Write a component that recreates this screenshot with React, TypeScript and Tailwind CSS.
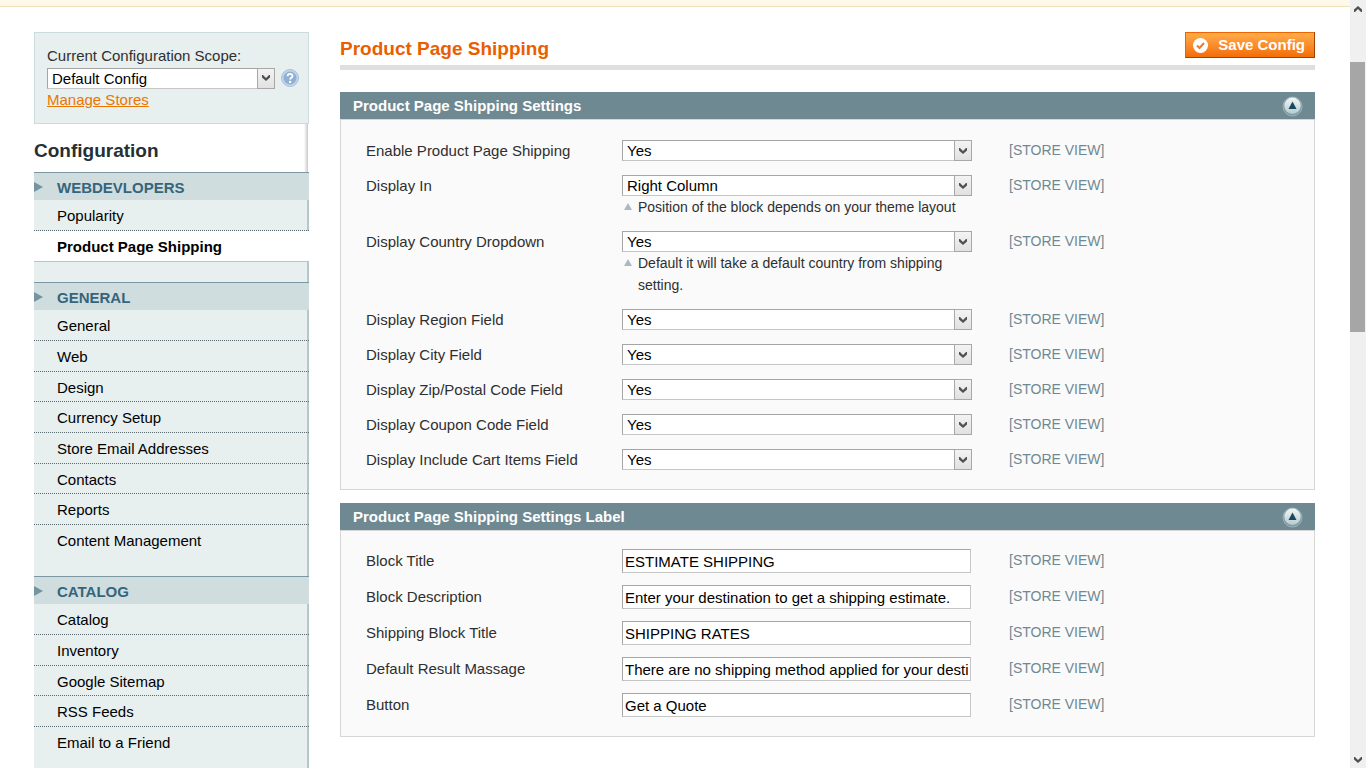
import React from "react";

const storeNav = [
  { title: "WEBDEVLOPERS", items: ["Popularity", "Product Page Shipping"] },
  {
    title: "GENERAL",
    items: [
      "General",
      "Web",
      "Design",
      "Currency Setup",
      "Store Email Addresses",
      "Contacts",
      "Reports",
      "Content Management",
    ],
  },
  {
    title: "CATALOG",
    items: ["Catalog", "Inventory", "Google Sitemap", "RSS Feeds", "Email to a Friend"],
  },
];

const activeItem = "Product Page Shipping";

const displayFields = [
  { id: "enable", label: "Enable Product Page Shipping", value: "Yes", hint: "" },
  {
    id: "display_in",
    label: "Display In",
    value: "Right Column",
    hint: "Position of the block depends on your theme layout",
  },
  {
    id: "country",
    label: "Display Country Dropdown",
    value: "Yes",
    hint: "Default it will take a default country from shipping setting.",
  },
  { id: "region", label: "Display Region Field", value: "Yes", hint: "" },
  { id: "city", label: "Display City Field", value: "Yes", hint: "" },
  { id: "zip", label: "Display Zip/Postal Code Field", value: "Yes", hint: "" },
  { id: "coupon", label: "Display Coupon Code Field", value: "Yes", hint: "" },
  { id: "cart_items", label: "Display Include Cart Items Field", value: "Yes", hint: "" },
];

const textFields = [
  { id: "block_title", label: "Block Title", value: "ESTIMATE SHIPPING" },
  {
    id: "block_description",
    label: "Block Description",
    value: "Enter your destination to get a shipping estimate.",
  },
  { id: "rates_title", label: "Shipping Block Title", value: "SHIPPING RATES" },
  {
    id: "default_result",
    label: "Default Result Massage",
    value: "There are no shipping method applied for your destination.",
  },
  { id: "button", label: "Button", value: "Get a Quote" },
];

function SelectBox({ id, value }: { id: string; value: string }) {
  const options = value === "Yes" ? ["Yes", "No"] : [value];
  return (
    <div className="relative h-[21px] w-full">
      <select
        id={id}
        defaultValue={value}
        className="block h-[21px] w-full appearance-none border border-[#a5a5a5] border-b-[#c6c6c6] bg-white pl-1 pt-px text-[15px] leading-[18px] text-black"
      >
        {options.map((option) => (
          <option key={option}>{option}</option>
        ))}
      </select>
      <span className="pointer-events-none absolute right-0 top-0 flex h-[21px] w-[18px] items-center justify-center border border-[#a8a8a8] bg-linear-to-b from-[#f3f3f3] to-[#e1e1e1]">
        <svg width="8" height="6" viewBox="0 0 8 6">
          <path d="M0 0 H1 L4 3 L7 0 H8 V2.5 L4 6 L0 2.5 Z" fill="#505050" />
        </svg>
      </span>
    </div>
  );
}

function Hint({ children }: { children: React.ReactNode }) {
  return (
    <p className="flex items-start gap-[6px] pl-[2px] text-[14px] leading-[22px] text-[#2f2f2f]">
      <svg className="mt-[7px] shrink-0" width="8" height="7" viewBox="0 0 8 7">
        <path d="M4 0 L8 7 H0 Z" fill="#a9bbc1" />
      </svg>
      <span>{children}</span>
    </p>
  );
}

function FieldRow({
  id,
  label,
  centered = false,
  children,
}: {
  id: string;
  label: string;
  centered?: boolean;
  children: React.ReactNode;
}) {
  return (
    <div
      className={
        centered
          ? "grid min-h-[22px] grid-cols-[256px_350px_1fr] items-center"
          : "grid min-h-[22px] grid-cols-[256px_350px_1fr] items-start"
      }
    >
      <label htmlFor={id} className="text-[15px] leading-[22px] text-[#2f2f2f]">
        {label}
      </label>
      <div>{children}</div>
      <span className="h-[22px] pl-[37px] text-[14px] leading-5 text-[#6f8992]">[STORE VIEW]</span>
    </div>
  );
}

function CollapseIcon() {
  return (
    <svg width="21" height="21" viewBox="0 0 21 21">
      <defs>
        <linearGradient id="knob" x1="0" y1="0" x2="0" y2="1">
          <stop offset="0" stopColor="#f2f6f6" />
          <stop offset="1" stopColor="#b5cbcf" />
        </linearGradient>
      </defs>
      <circle cx="10.5" cy="10.5" r="9.5" fill="#7f9aa2" stroke="#9db3b9" />
      <circle cx="10.5" cy="9.8" r="8.2" fill="url(#knob)" />
      <path d="M10.5 5.5 L14.5 13 H6.5 Z" fill="#17495a" />
    </svg>
  );
}

function Panel({ title, children }: { title: string; children: React.ReactNode }) {
  return (
    <section>
      <header className="flex h-[27px] items-center justify-between bg-[#6f8992] pl-[13px] pr-3">
        <h2 className="text-[15px] font-bold leading-[27px] text-white">{title}</h2>
        <button type="button" aria-label="Collapse section" className="pt-[2px]">
          <CollapseIcon />
        </button>
      </header>
      <div className="border border-[#d6d6d6] bg-[#fafafa] px-[25px]">{children}</div>
    </section>
  );
}

function Sidebar() {
  return (
    <aside className="flex w-[275px] shrink-0 flex-col">
      <div className="shrink-0 border border-[#cbdcdf] bg-[#e7efef] py-3 pl-3 pr-[9px]">
        <label htmlFor="scope" className="block text-[15px] leading-[22px] text-[#2f2f2f]">
          Current Configuration Scope:
        </label>
        <div className="flex h-[22px] items-center gap-[6px]">
          <div className="w-[228px]">
            <SelectBox id="scope" value="Default Config" />
          </div>
          <a href="#help" aria-label="Help">
            <svg width="18" height="18" viewBox="0 0 18 18">
              <circle cx="9" cy="9" r="8.5" fill="#c3d5e8" stroke="#a9c2dd" />
              <circle cx="9" cy="9" r="6.5" fill="#8fb0d4" />
              <path
                d="M6.6 7.2 C6.6 4.2 11.6 4.2 11.5 7.1 C11.4 8.9 9.1 8.7 9.1 10.6"
                fill="none"
                stroke="#fff"
                strokeWidth="1.8"
              />
              <circle cx="9.1" cy="12.9" r="1.2" fill="#fff" />
            </svg>
          </a>
        </div>
        <a href="#stores" className="block text-[15px] leading-[22px] text-[#ea7601] underline">
          Manage Stores
        </a>
      </div>
      <div className="mr-px flex h-12 shrink-0 items-center justify-between pt-[5px]">
        <h3 className="text-[19px] font-bold leading-6 text-[#253033]">Configuration</h3>
        <div className="-mt-[5px] h-12 w-1 bg-linear-to-r from-white to-[#c9c9c9]" />
      </div>
      <nav className="flex flex-1 flex-col bg-[#e7efef]">
        {storeNav.map((group) => (
          <div key={group.title} className="border-r-2 border-[#b4c8cb] pb-5 last:flex-1">
            <h4 className="-mr-[2px] flex h-7 items-center border-t border-[#7d98a2] bg-[#d0dddf] pt-[2px] text-[15px] font-bold leading-[25px] text-[#35657b]">
              <svg className="-mt-[2px] mr-[14px]" width="9" height="10" viewBox="0 0 9 10">
                <path d="M0 0 L9 5 L0 10 Z" fill="#7394a0" />
              </svg>
              {group.title}
            </h4>
            <ul>
              {group.items.map((item) => (
                <li key={item} className="group h-[31px] nth-[3n]:h-[30px]">
                  <a
                    href="#section"
                    className={
                      item === activeItem
                        ? "-mr-[2px] block h-full border-b border-[#b9c4c6] bg-white pl-[23px] text-[15px] font-bold leading-[31px] text-black"
                        : "-mr-[2px] block h-full border-b border-dotted border-[#5a6a6e] pl-[23px] text-[15px] leading-[31px] text-black group-last:border-b-0"
                    }
                  >
                    {item}
                  </a>
                </li>
              ))}
            </ul>
          </div>
        ))}
      </nav>
    </aside>
  );
}

function Scrollbar() {
  return (
    <div className="flex w-4 shrink-0 flex-col items-center bg-[#f0f0f0]">
      <svg className="mt-[6px] shrink-0" width="8" height="6" viewBox="0 0 8 6">
        <path d="M0 6 H1 L4 3 L7 6 H8 V3.5 L4 0 L0 3.5 Z" fill="#505050" />
      </svg>
      <div className="mr-px mt-[50px] h-[270px] w-[15px] bg-[#a6a6a6]" />
      <svg className="mb-[5px] mt-auto shrink-0" width="8" height="6" viewBox="0 0 8 6">
        <path d="M0 0 H1 L4 3 L7 0 H8 V2.5 L4 6 L0 2.5 Z" fill="#505050" />
      </svg>
    </div>
  );
}

export default function App() {
  return (
    <div className="flex h-screen overflow-hidden bg-white font-['Liberation_Sans',Arial,sans-serif]">
      <div className="flex min-w-0 flex-1 flex-col">
        <div className="h-[7px] shrink-0 border-b border-[#eee2be] bg-[#fff9e9]" />
        <div className="flex min-h-0 flex-1 gap-[31px] pl-[34px] pr-[35px] pt-[25px]">
          <Sidebar />
          <main className="min-w-0 flex-1">
            <div className="flex items-start justify-between border-b-[5px] border-[#dfdfdf]">
              <h1 className="text-[19px] font-bold leading-[33px] text-[#eb5e00]">
                Product Page Shipping
              </h1>
              <button
                type="button"
                className="flex h-[26px] items-center gap-[10px] border border-[#ed6502] border-b-[#a04300] border-r-[#a04300] bg-linear-to-b from-[#ffac47] to-[#f36c00] pl-[7px] pr-[9px] text-[15px] leading-6 font-bold text-white"
              >
                <svg width="15" height="15" viewBox="0 0 15 15">
                  <circle cx="7.5" cy="7.5" r="7.5" fill="#fff" />
                  <path d="M4 7.5 L6.5 10 L11 5" fill="none" stroke="#f3772c" strokeWidth="2" />
                </svg>
                Save Config
              </button>
            </div>
            <form className="mt-[22px] flex flex-col gap-[13px]">
              <Panel title="Product Page Shipping Settings">
                <div className="flex flex-col gap-[13px] pb-[18px] pt-5">
                  {displayFields.map((field) => (
                    <FieldRow key={field.id} id={field.id} label={field.label}>
                      <SelectBox id={field.id} value={field.value} />
                      {field.hint && <Hint>{field.hint}</Hint>}
                    </FieldRow>
                  ))}
                </div>
              </Panel>
              <Panel title="Product Page Shipping Settings Label">
                <div className="flex flex-col gap-3 pb-[19px] pt-[18px]">
                  {textFields.map((field) => (
                    <FieldRow key={field.id} id={field.id} label={field.label} centered>
                      <input
                        id={field.id}
                        type="text"
                        defaultValue={field.value}
                        className="block h-6 w-[349px] border border-[#a5a5a5] border-b-[#c6c6c6] border-r-[#c6c6c6] bg-white px-[2px] text-[15px] text-black"
                      />
                    </FieldRow>
                  ))}
                </div>
              </Panel>
            </form>
          </main>
        </div>
      </div>
      <Scrollbar />
    </div>
  );
}
